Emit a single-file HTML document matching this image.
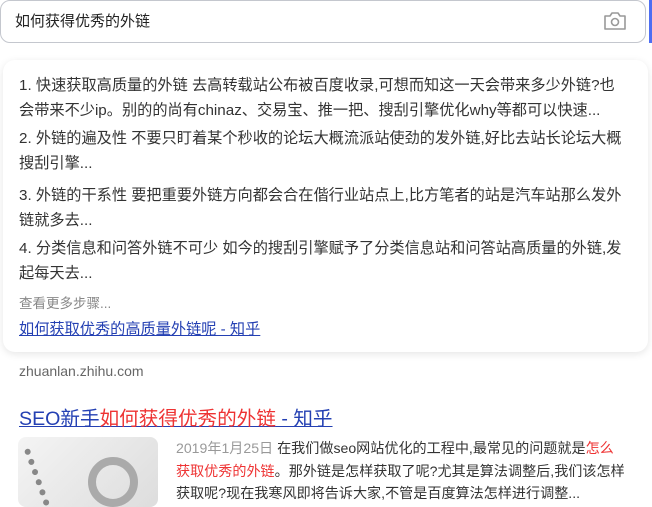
<!DOCTYPE html>
<html><head><meta charset="utf-8"><style>
body{margin:0;width:652px;height:500px;overflow:hidden;background:#fff;font-family:"Liberation Sans","Noto Sans CJK SC",sans-serif;position:relative}
.abs{position:absolute}
.search{left:0;top:0;width:646px;height:43px;border:1px solid #c4c7ce;border-radius:10px;box-sizing:border-box;font-size:15px;color:#222;line-height:41px;padding-left:14px;}
.bar{left:649px;top:0;width:3px;height:43px;background:#4e6ef2}
.card{left:3px;top:60px;width:645px;height:292px;border-radius:12px;box-shadow:0 2px 8px rgba(0,0,0,.1);background:#fff}
.t{left:19px;font-size:15.2px;color:#333;white-space:nowrap}
</style></head><body>
<div class="abs search">如何获得优秀的外链</div>
<svg class="abs" style="left:603px;top:11px" width="24" height="20" viewBox="0 0 24 20"><path d="M2 5h5l2-3h6l2 3h5v13H2z" fill="none" stroke="#999" stroke-width="1.6" stroke-linejoin="round"/><circle cx="12" cy="11" r="3.5" fill="none" stroke="#999" stroke-width="1.6"/></svg>
<div class="abs bar"></div>
<div class="abs card"></div>
<div class="abs t" style="top:73px">1. 快速获取高质量的外链 去高转载站公布被百度收录,可想而知这一天会带来多少外链?也</div>
<div class="abs t" style="top:98px">会带来不少ip。别的的尚有chinaz、交易宝、推一把、搜刮引擎优化why等都可以快速...</div>
<div class="abs t" style="top:126px">2. 外链的遍及性 不要只盯着某个秒收的论坛大概流派站使劲的发外链,好比去站长论坛大概</div>
<div class="abs t" style="top:151px">搜刮引擎...</div>
<div class="abs t" style="top:183px">3. 外链的干系性 要把重要外链方向都会合在偕行业站点上,比方笔者的站是汽车站那么发外</div>
<div class="abs t" style="top:208px">链就多去...</div>
<div class="abs t" style="top:236px">4. 分类信息和问答外链不可少 如今的搜刮引擎赋予了分类信息站和问答站高质量的外链,发</div>
<div class="abs t" style="top:261px">起每天去...</div>
<div class="abs t" style="top:292px;font-size:13.5px;color:#888">查看更多步骤...</div>
<div class="abs t" style="top:317px;color:#2440b3;text-decoration:underline">如何获取优秀的高质量外链呢 - 知乎</div>
<div class="abs t" style="top:363px;font-size:14px;color:#666">zhuanlan.zhihu.com</div>
<div class="abs t" style="top:402px;font-size:19.6px;color:#2440b3;text-decoration:underline">SEO新手<span style="color:#e33">如何获得优秀的外链</span> - 知乎</div>
<div class="abs" style="left:18px;top:437px;width:140px;height:70px;border-radius:8px;background:linear-gradient(135deg,#f4f4f4,#ddd);overflow:hidden">
<div class="abs" style="left:70px;top:20px;width:50px;height:50px;border-radius:50%;border:8px solid #aaa;box-sizing:border-box"></div>
<div class="abs" style="left:15px;top:5px;width:30px;height:60px;border-left:6px dotted #888;transform:rotate(-20deg)"></div></div>
<div class="abs" style="left:176px;top:437px;width:470px;font-size:14.1px;line-height:22.5px;color:#333;white-space:nowrap">
<span style="color:#999">2019年1月25日</span> 在我们做seo网站优化的工程中,最常见的问题就是<span style="color:#e33">怎么</span><br><span style="color:#e33">获取优秀的外链</span>。那外链是怎样获取了呢?尤其是算法调整后,我们该怎样<br>获取呢?现在我寒风即将告诉大家,不管是百度算法怎样进行调整...</div>
</body></html>
